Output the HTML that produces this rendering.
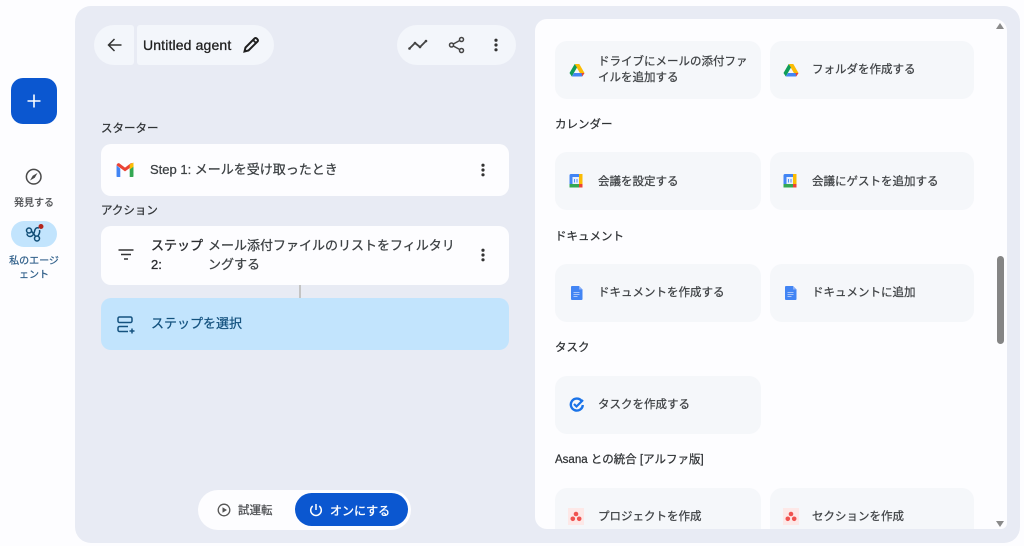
<!DOCTYPE html>
<html lang="ja"><head><meta charset="utf-8"><title>Agent</title>
<style>
html,body{margin:0;padding:0;width:1024px;height:546px;overflow:hidden;background:#fdfdff}
body{position:relative;font-family:"Liberation Sans","Noto Sans CJK JP",sans-serif;color:#3c4043;font-size:12px}
.a{position:absolute}
.t{position:absolute;white-space:nowrap;-webkit-text-stroke:.25px currentColor}
svg{position:absolute;display:block}
.card{position:absolute;background:#f5f7fa;border-radius:12px;width:206px;height:58px}
.h{position:absolute;left:555px;font-size:11.5px;color:#303336;white-space:nowrap;-webkit-text-stroke:.25px currentColor}
.l{position:absolute;font-size:11.5px;line-height:16px;color:#3f4245;white-space:nowrap;-webkit-text-stroke:.25px currentColor}
</style></head><body>
<svg width="0" height="0" style="position:absolute"><defs>
<g id="drive"><path d="M5.700 2h4.600l5.200 9h-4.600z" fill="#fbbc04"/><path d="M5.700 2 .5 11l2.300 3.500L8 5.500z" fill="#0f9d58"/><path d="M2.800 14.500h10.400l2.300-3.500H5z" fill="#4285f4"/><path d="M13.200 14.500 15.500 11h-3z" fill="#ea4335"/></g>
<g id="cal"><rect x="1.500" y="1" width="13" height="13.500" rx="1.500" fill="#4285f4"/><rect x="11" y="1" width="3.500" height="13.500" fill="#fbbc04"/><rect x="1.500" y="11" width="10" height="3.500" fill="#34a853"/><rect x="11" y="11" width="3.500" height="3.500" fill="#ea4335"/><rect x="4.500" y="4" width="6.500" height="7" fill="#e8f0fe"/><path d="M6.500 6v3.500M9 6v3.500" stroke="#4285f4" stroke-width=".9"/></g>
<g id="doc"><path d="M2 1h7l3.500 3.500V14a1 1 0 0 1-1 1H2a1 1 0 0 1-1-1V2a1 1 0 0 1 1-1z" fill="#4285f4"/><path d="M9 1l3.500 3.500H9z" fill="#8ab0f7"/><path d="M3.500 7.500h6M3.500 9.500h6M3.500 11.500h4" stroke="#a9c6fa" stroke-width="1"/></g>
<g id="asana"><rect width="16" height="17" fill="#fde8e7"/><circle cx="8" cy="6" r="2.300" fill="#f0524f"/><circle cx="4.800" cy="10.800" r="2.300" fill="#f0524f"/><circle cx="11.200" cy="10.800" r="2.300" fill="#f0524f"/></g>
<g id="dots"><circle cx="8" cy="3.200" r="1.600" fill="#333"/><circle cx="8" cy="8" r="1.600" fill="#333"/><circle cx="8" cy="12.800" r="1.600" fill="#333"/></g>
</defs></svg>

<!-- left rail -->
<div class="a" style="left:11px;top:78px;width:46px;height:46px;border-radius:12px;background:#0b57d0"></div>
<svg style="left:25px;top:92px" width="18" height="18"><path d="M9 2.500v13M2.500 9h13" stroke="#fff" stroke-width="1.600"/></svg>
<svg style="left:24px;top:167px" width="20" height="20" viewBox="0 0 20 20"><circle cx="9.700" cy="9.700" r="7.300" fill="none" stroke="#4a4a4a" stroke-width="1.500"/><path d="M13.500 6 10.800 10.800 6 13.500 8.700 8.700z" fill="#4a4a4a"/></svg>
<div class="t" style="left:14px;top:197px;font-size:10px;line-height:14px;color:#4d4f52">発見する</div>
<div class="a" style="left:11px;top:221px;width:46px;height:26px;border-radius:13px;background:#c2e4fd"></div>
<svg style="left:24px;top:223px" width="22" height="22" viewBox="0 0 22 22"><g fill="none" stroke="#0f4c75" stroke-width="1.500"><circle cx="5" cy="7.500" r="2.500"/><circle cx="13" cy="15.500" r="2.500"/><path d="M15 5c-3-1-4 1-4.500 3.500-.5 2.500-2 5-4.500 5-2 0-3-1.500-3-3"/><path d="M7.500 8c1 2 3 3.500 4 5.500M15.500 7c.7 2.500-.5 4.500-1.500 6"/></g><circle cx="17" cy="3.500" r="2.500" fill="#b3261e"/></svg>
<div class="t" style="left:9px;top:255px;width:50px;white-space:normal;text-align:center;font-size:10px;line-height:14px;color:#31608a">私のエージェント</div>

<!-- main bg -->
<div class="a" style="left:75px;top:6px;width:945px;height:537px;border-radius:16px;background:#e8ebf4"></div>

<!-- header -->
<div class="a" style="left:94px;top:25px;width:40px;height:40px;background:#f3f6fb;border-radius:20px 3px 3px 20px"></div>
<svg style="left:106px;top:35px" width="18" height="20" viewBox="0 0 18 20"><path d="M15.500 10H3M8.500 4 2.500 10l6 6" fill="none" stroke="#333" stroke-width="1.500"/></svg>
<div class="a" style="left:137px;top:25px;width:137px;height:40px;background:#f3f6fb;border-radius:3px 20px 20px 3px"></div>
<div class="t" style="left:143px;top:36px;font-size:14px;line-height:18px;letter-spacing:.14px;color:#1f1f1f;-webkit-text-stroke:.3px #1f1f1f">Untitled agent</div>
<svg style="left:242px;top:36px" width="18" height="18" viewBox="0 0 18 18"><path d="M2.500 15.500 3.500 11.500 12.500 2.500a1.500 1.500 0 0 1 2.200 0l.8.800a1.500 1.500 0 0 1 0 2.200L6.500 14.500z" fill="none" stroke="#1f1f1f" stroke-width="2"/><path d="M11 4l3 3" stroke="#1f1f1f" stroke-width="1.800"/></svg>
<div class="a" style="left:397px;top:25px;width:119px;height:40px;background:#f3f6fb;border-radius:20px"></div>
<svg style="left:408px;top:36px" width="20" height="18" viewBox="0 0 20 18"><path d="M1 13 7 7l5 4 6-6" fill="none" stroke="#444" stroke-width="1.800"/><g fill="#444"><circle cx="1.500" cy="12.500" r="1.300"/><circle cx="7" cy="7" r="1.300"/><circle cx="12" cy="11" r="1.300"/><circle cx="18" cy="5" r="1.300"/></g></svg>
<svg style="left:448px;top:36px" width="18" height="18" viewBox="0 0 18 18"><g fill="none" stroke="#444" stroke-width="1.500"><circle cx="13.500" cy="3.500" r="2"/><circle cx="3.500" cy="9" r="2"/><circle cx="13.500" cy="14.500" r="2"/><path d="M5.300 8l6.400-3.500M5.300 10l6.400 3.500"/></g></svg>
<svg style="left:488px;top:37px" width="16" height="16"><use href="#dots"/></svg>

<!-- steps -->
<div class="t" style="left:101px;top:121px;font-size:11.500px;line-height:16px;color:#303336">スターター</div>
<div class="a" style="left:101px;top:144px;width:408px;height:52px;background:#fdfdff;border-radius:10px"></div>
<svg style="left:115px;top:162px" width="20" height="16" viewBox="0 0 20 17"><path d="M1 3.500V15a1 1 0 0 0 1 1h3V7z" fill="#4285f4"/><path d="M15 7v9h3a1 1 0 0 0 1-1V3.500z" fill="#34a853"/><path d="M1 3.500 10 10l9-6.500-.5-1.500-2-1L10 6 3.500 1l-2 1z" fill="#ea4335"/><path d="M15 2.500 19 .5V5l-4 3z" fill="#fbbc04"/></svg>
<div class="t" style="left:150px;top:161px;font-size:13px;line-height:18px;color:#3c4043">Step 1: メールを受け取ったとき</div>
<svg style="left:475px;top:162px" width="16" height="16"><use href="#dots"/></svg>

<div class="t" style="left:101px;top:203px;font-size:11.500px;line-height:16px;color:#303336">アクション</div>
<div class="a" style="left:101px;top:226px;width:408px;height:59px;background:#fdfdff;border-radius:10px"></div>
<svg style="left:117px;top:248px" width="18" height="14" viewBox="0 0 18 14"><path d="M1.500 2h15M4 6.500h10M7 11h4" stroke="#333" stroke-width="1.500"/></svg>
<div class="t" style="left:151px;top:236px;font-size:13px;line-height:19px;color:#2b2d30;-webkit-text-stroke:.35px #2b2d30">ステップ<br>2:</div>
<div class="t" style="left:208px;top:236px;font-size:13px;line-height:19px;color:#3c4043">メール添付ファイルのリストをフィルタリ<br>ングする</div>
<svg style="left:475px;top:247px" width="16" height="16"><use href="#dots"/></svg>
<div class="a" style="left:299px;top:285px;width:2px;height:13px;background:#c4c4c4"></div>
<div class="a" style="left:101px;top:298px;width:408px;height:52px;background:#c2e4fd;border-radius:10px"></div>
<svg style="left:116px;top:315px" width="20" height="20" viewBox="0 0 20 20"><g fill="none" stroke="#14527f" stroke-width="1.500"><rect x="2" y="2" width="14" height="5.500" rx="1.500"/><path d="M12 11.500H3.500A1.500 1.500 0 0 0 2 13v2a1.500 1.500 0 0 0 1.500 1.500H12"/><path d="M16 13.500v5M13.500 16h5"/></g></svg>
<div class="t" style="left:151px;top:315px;font-size:13px;line-height:18px;color:#14527f">ステップを選択</div>

<!-- bottom -->
<div class="a" style="left:198px;top:490px;width:213px;height:40px;background:#fdfdff;border-radius:20px"></div>
<svg style="left:216px;top:502px" width="16" height="16" viewBox="0 0 16 16"><circle cx="8" cy="8" r="5.800" fill="none" stroke="#555" stroke-width="1.300"/><path d="M6.500 5.300 11 8l-4.500 2.700z" fill="#555"/></svg>
<div class="t" style="left:238px;top:503px;font-size:11.500px;line-height:16px;color:#4d4f52">試運転</div>
<div class="a" style="left:295px;top:493px;width:113px;height:33px;background:#0b57d0;border-radius:17px"></div>
<svg style="left:308px;top:502px" width="16" height="16" viewBox="0 0 16 16"><path d="M8 2v6M4.700 4A5.300 5.300 0 1 0 11.300 4" fill="none" stroke="#fff" stroke-width="1.500"/></svg>
<div class="t" style="left:330px;top:503px;font-size:12px;line-height:16px;color:#fff;-webkit-text-stroke:.35px #fff">オンにする</div>

<!-- right panel -->
<div class="a" style="left:535px;top:19px;width:472px;height:510px;background:#fdfdff;border-radius:12px 12px 6px 12px;overflow:hidden"></div>

<div class="card" style="left:555px;top:41px"></div>
<div class="card" style="left:770px;top:41px;width:204px"></div>
<svg style="left:569px;top:62px" width="16" height="16"><use href="#drive"/></svg>
<div class="l" style="left:598px;top:54px">ドライブにメールの添付ファ<br>イルを追加する</div>
<svg style="left:783px;top:62px" width="16" height="16"><use href="#drive"/></svg>
<div class="l" style="left:812px;top:62px">フォルダを作成する</div>

<div class="h" style="top:117px;line-height:16px">カレンダー</div>
<div class="card" style="left:555px;top:152px"></div>
<div class="card" style="left:770px;top:152px;width:204px"></div>
<svg style="left:568px;top:173px" width="16" height="16"><use href="#cal"/></svg>
<div class="l" style="left:598px;top:174px">会議を設定する</div>
<svg style="left:782px;top:173px" width="16" height="16"><use href="#cal"/></svg>
<div class="l" style="left:812px;top:174px">会議にゲストを追加する</div>

<div class="h" style="top:229px;line-height:16px">ドキュメント</div>
<div class="card" style="left:555px;top:264px"></div>
<div class="card" style="left:770px;top:264px;width:204px"></div>
<svg style="left:570px;top:285px" width="16" height="16"><use href="#doc"/></svg>
<div class="l" style="left:598px;top:285px">ドキュメントを作成する</div>
<svg style="left:784px;top:285px" width="16" height="16"><use href="#doc"/></svg>
<div class="l" style="left:812px;top:285px">ドキュメントに追加</div>

<div class="h" style="top:340px;line-height:16px">タスク</div>
<div class="card" style="left:555px;top:376px"></div>
<svg style="left:569px;top:397px" width="16" height="16" viewBox="0 0 16 16"><path d="M12.500 3.800A6 6 0 1 0 13.800 8" fill="none" stroke="#1a73e8" stroke-width="2.400"/><path d="M5 7l2.500 2.500L14 3" fill="none" stroke="#1a73e8" stroke-width="2.200"/></svg>
<div class="l" style="left:598px;top:397px">タスクを作成する</div>

<div class="h" style="top:452px;line-height:16px">Asana との統合 [アルファ版]</div>
<div class="a" style="left:555px;top:488px;width:206px;height:41px;background:#f5f7fa;border-radius:12px 12px 0 0"></div>
<div class="a" style="left:770px;top:488px;width:204px;height:41px;background:#f5f7fa;border-radius:12px 12px 0 0"></div>
<svg style="left:568px;top:508px" width="16" height="17"><use href="#asana"/></svg>
<div class="l" style="left:598px;top:509px">プロジェクトを作成</div>
<svg style="left:783px;top:508px" width="16" height="17"><use href="#asana"/></svg>
<div class="l" style="left:812px;top:509px">セクションを作成</div>

<!-- scrollbar -->
<svg style="left:995px;top:22px" width="10" height="8"><path d="M1 7 5 1l4 6z" fill="#8a8a8a"/></svg>
<div class="a" style="left:997px;top:256px;width:7px;height:88px;background:#858585;border-radius:4px"></div>
<svg style="left:995px;top:520px" width="10" height="8"><path d="M1 1h8L5 7z" fill="#8a8a8a"/></svg>
</body></html>
